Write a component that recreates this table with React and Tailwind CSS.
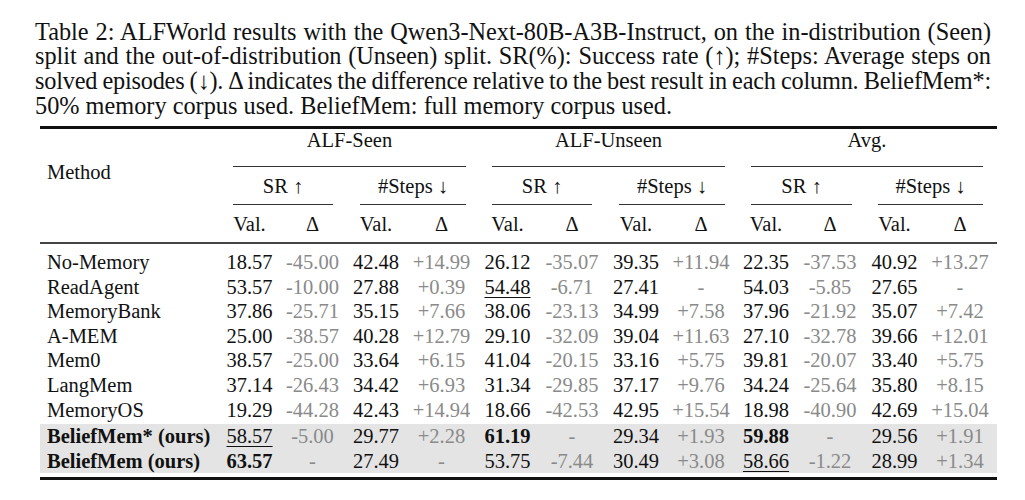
import React from 'react';

// column template shared by the header and every body row
const cols = 'grid grid-cols-[178px_63px_63px_64px_67px_65px_64px_64px_66px_64px_64px_65px_70px]';

const groups = [
  { pos: 'col-start-2 col-span-4', trim: 'ml-[15px] mr-[9px]', label: 'ALF-Seen' },
  { pos: 'col-start-6 col-span-4', trim: 'ml-[17px] mr-[9px]', label: 'ALF-Unseen' },
  { pos: 'col-start-10 col-span-4', trim: 'ml-[17px] mr-[14px]', label: 'Avg.' },
];

const subGroups = [
  { pos: 'col-start-2 col-span-2', trim: 'ml-[15px] mr-[11px]', label: 'SR ↑' },
  { pos: 'col-start-4 col-span-2', trim: 'ml-[16px] mr-[9px]', label: '#Steps ↓' },
  { pos: 'col-start-6 col-span-2', trim: 'ml-[17px] mr-[12px]', label: 'SR ↑' },
  { pos: 'col-start-8 col-span-2', trim: 'ml-[15px] mr-[9px]', label: '#Steps ↓' },
  { pos: 'col-start-10 col-span-2', trim: 'ml-[17px] mr-[10px]', label: 'SR ↑' },
  { pos: 'col-start-12 col-span-2', trim: 'ml-[16px] mr-[14px]', label: '#Steps ↓' },
];

const leafCols = [
  'col-start-2', 'col-start-3', 'col-start-4', 'col-start-5', 'col-start-6', 'col-start-7',
  'col-start-8', 'col-start-9', 'col-start-10', 'col-start-11', 'col-start-12', 'col-start-13',
];

// "u:" = underlined (second best), "b:" = bold (best)
const rows = [
  { name: 'No-Memory', cells: ['18.57', '-45.00', '42.48', '+14.99', '26.12', '-35.07', '39.35', '+11.94', '22.35', '-37.53', '40.92', '+13.27'] },
  { name: 'ReadAgent', cells: ['53.57', '-10.00', '27.88', '+0.39', 'u:54.48', '-6.71', '27.41', '-', '54.03', '-5.85', '27.65', '-'] },
  { name: 'MemoryBank', cells: ['37.86', '-25.71', '35.15', '+7.66', '38.06', '-23.13', '34.99', '+7.58', '37.96', '-21.92', '35.07', '+7.42'] },
  { name: 'A-MEM', cells: ['25.00', '-38.57', '40.28', '+12.79', '29.10', '-32.09', '39.04', '+11.63', '27.10', '-32.78', '39.66', '+12.01'] },
  { name: 'Mem0', cells: ['38.57', '-25.00', '33.64', '+6.15', '41.04', '-20.15', '33.16', '+5.75', '39.81', '-20.07', '33.40', '+5.75'] },
  { name: 'LangMem', cells: ['37.14', '-26.43', '34.42', '+6.93', '31.34', '-29.85', '37.17', '+9.76', '34.24', '-25.64', '35.80', '+8.15'] },
  { name: 'MemoryOS', cells: ['19.29', '-44.28', '42.43', '+14.94', '18.66', '-42.53', '42.95', '+15.54', '18.98', '-40.90', '42.69', '+15.04'] },
];

const ours = [
  { name: 'BeliefMem* (ours)', cells: ['u:58.57', '-5.00', '29.77', '+2.28', 'b:61.19', '-', '29.34', '+1.93', 'b:59.88', '-', '29.56', '+1.91'] },
  { name: 'BeliefMem (ours)', cells: ['b:63.57', '-', '27.49', '-', '53.75', '-7.44', '30.49', '+3.08', 'u:58.66', '-1.22', '28.99', '+1.34'] },
];

const Cell = ({ raw, i }) => {
  const isDelta = i % 2 === 1;
  let text = raw;
  let cls = isDelta ? 'text-[#8a8a8a]' : 'text-[#111]';
  if (raw.startsWith('u:')) {
    text = raw.slice(2);
    cls += ' underline decoration-1 underline-offset-[3px]';
  } else if (raw.startsWith('b:')) {
    text = raw.slice(2);
    cls += ' font-bold';
  }
  return (
    <div className={`text-center ${i === 11 ? 'pr-[4px]' : ''}`}>
      <span className={cls}>{text}</span>
    </div>
  );
};

const Row = ({ row, bold }) => (
  <div className={`${cols} h-[24.6px] leading-[24.6px]`}>
    <div className={`pl-[7px] text-[#111] ${bold ? 'font-bold' : ''}`}>{row.name}</div>
    {row.cells.map((c, i) => (
      <Cell key={i} raw={c} i={i} />
    ))}
  </div>
);

export default function App() {
  return (
    <div className="w-[1025px] h-[500px] overflow-hidden bg-white text-[#111] font-['Liberation_Serif','Times_New_Roman',serif]">
      {/* caption: full lines are squeezed then justified, like TeX's shrinkable glue */}
      <div className="ml-[35px] w-[956px] pt-[19.5px] text-[24.3px] leading-[24.7px]">
        <div className="text-justify [text-align-last:justify] [word-spacing:-3px]">
          Table 2: ALFWorld results with the Qwen3-Next-80B-A3B-Instruct, on the in-distribution (Seen)
        </div>
        <div className="text-justify [text-align-last:justify] [word-spacing:-3px]">
          split and the out-of-distribution (Unseen) split. SR(%): Success rate (↑); #Steps: Average steps on
        </div>
        <div className="text-justify [text-align-last:justify] [word-spacing:-3px] tracking-[-0.2px]">
          solved episodes (↓). Δ indicates the difference relative to the best result in each column. BeliefMem*:
        </div>
        <div>50% memory corpus used. BeliefMem: full memory corpus used.</div>
      </div>

      {/* table */}
      <div className="ml-[40px] w-[957px] mt-[7.7px] text-[20.5px]">
        <div className="h-[3px] bg-[#111]" />

        <div className={`${cols} leading-[22px]`}>
          <div className="col-start-1 row-start-1 row-span-3 pt-[32px] pl-[7px]">Method</div>

          {groups.map((g) => (
            <div key={g.label} className={`${g.pos} row-start-1 ${g.trim}`}>
              <div className="text-center">{g.label}</div>
              <div className="mt-[15px] h-px bg-[#333]" />
            </div>
          ))}

          {subGroups.map((g, i) => (
            <div key={i} className={`${g.pos} row-start-2 pt-[8px] ${g.trim}`}>
              <div className="text-center whitespace-nowrap">{g.label}</div>
              <div className="mt-[7px] h-px bg-[#333]" />
            </div>
          ))}

          {leafCols.map((c, i) => (
            <div key={c} className={`${c} row-start-3 pt-[8px] pb-[7px] text-center ${i === 11 ? 'pr-[4px]' : ''}`}>
              {i % 2 === 0 ? 'Val.' : 'Δ'}
            </div>
          ))}
        </div>

        <div className="h-[2px] bg-[#444]" />

        <div className="pt-[6px]">
          {rows.map((r) => (
            <Row key={r.name} row={r} />
          ))}
        </div>

        <div className="mt-[2px] bg-[#e4e4e4]">
          {ours.map((r) => (
            <Row key={r.name} row={r} bold />
          ))}
        </div>

        <div className="mt-[4px] h-[3px] bg-[#111]" />
      </div>
    </div>
  );
}
